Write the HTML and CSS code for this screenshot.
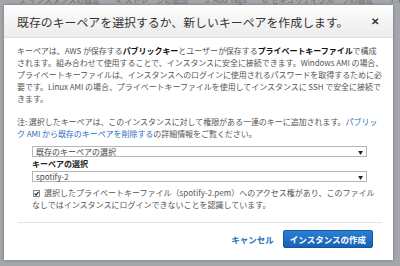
FILE: index.html
```html
<!DOCTYPE html>
<html lang="ja">
<head>
    <meta charset="UTF-8">
    <meta name="viewport" content="width=device-width, initial-scale=1.0">
    <title>キーペアの選択</title>
    <link rel="stylesheet" href="styles.css">
</head>
<body>
    <div class="page">
        <div class="steps">
            <span>3. インスタンスの設定</span>
            <span>4. ストレージの追加</span>
            <span>5. Add Tags</span>
            <span>6. セキュリティグループの設定</span>
            <span>7. 確認</span>
        </div>
    </div>

    <div class="modal">
        <div class="modal-header">
            <h2 class="modal-title">既存のキーペアを選択するか、新しいキーペアを作成します。</h2>
            <span class="modal-close">✕</span>
        </div>
        <div class="modal-body">
            <p class="text">
                キーペアは、AWS が保存する<b>パブリックキー</b>とユーザーが保存する<b>プライベートキーファイル</b>で構成<br>
                されます。組み合わせて使用することで、インスタンスに安全に接続できます。Windows AMI の場合、<br>
                プライベートキーファイルは、インスタンスへのログインに使用されるパスワードを取得するために必<br>
                要です。Linux AMI の場合、プライベートキーファイルを使用してインスタンスに SSH で安全に接続で<br>
                きます。
            </p>
            <p class="text note">
                注: 選択したキーペアは、このインスタンスに対して権限がある一連のキーに追加されます。<a href="#">パブリッ<br>
                ク AMI から既存のキーペアを削除する</a>の詳細情報をご覧ください。
            </p>
            <div class="form">
                <div class="select">
                    <span>既存のキーペアの選択</span>
                    <span class="arrow">▼</span>
                </div>
                <div class="label">キーペアの選択</div>
                <div class="select">
                    <span>spotify-2</span>
                    <span class="arrow">▼</span>
                </div>
                <p class="ack">
                    <span class="checkbox">
                        <svg width="7" height="7" viewBox="0 0 7 7"><rect x="0.5" y="0.5" width="6" height="6" fill="#fff" stroke="#888"/><path d="M1.6 3.6 L3 5 L5.5 1.8" fill="none" stroke="#222" stroke-width="1.2"/></svg>
                    </span>選択したプライベートキーファイル（spotify-2.pem）へのアクセス権があり、このファイル<br>
                    なしではインスタンスにログインできないことを認識しています。
                </p>
            </div>
            <hr class="divider">
            <div class="modal-footer">
                <a href="#" class="btn-link">キャンセル</a>
                <button class="btn-primary">インスタンスの作成</button>
            </div>
        </div>
    </div>
</body>
</html>
```

FILE: styles.css
```css
* {
    margin: 0;
    padding: 0;
    box-sizing: border-box;
}

body {
    font-family: "Noto Sans CJK JP", "Noto Sans", sans-serif;
    background: #a2a5a9;
    width: 400px;
    height: 266px;
    overflow: hidden;
    position: relative;
}

.page {
    height: 266px;
    background: #a2a5a9;
}

.steps {
    display: flex;
    gap: 16px;
    padding-left: 20px;
    margin-top: -5px;
    font-size: 8px;
    line-height: 10px;
    color: #6d7075;
    white-space: nowrap;
}

.modal {
    position: absolute;
    left: 4px;
    top: 5px;
    width: 389px;
    height: 255px;
    background: #fff;
    box-shadow: 0 0 3px rgba(0, 0, 0, 0.3);
    display: flex;
    flex-direction: column;
}

.modal-header {
    height: 33px;
    display: flex;
    align-items: center;
    justify-content: space-between;
    padding: 0 14px 0 13px;
    background: linear-gradient(#fdfdfd, #ececec);
    border-bottom: 1px solid #dcdcdc;
}

.modal-title {
    font-size: 11.9px;
    font-weight: normal;
    color: #333;
    white-space: nowrap;
}

.modal-close {
    font-size: 10px;
    font-weight: bold;
    color: #333;
    line-height: 1;
}

.modal-body {
    flex: 1;
    padding: 7px 11px 0 13px;
    display: flex;
    flex-direction: column;
}

.text {
    font-size: 8px;
    line-height: 12px;
    color: #555;
    white-space: nowrap;
    letter-spacing: -0.05px;
}

.text b {
    color: #111;
}

.note {
    margin-top: 11px;
}

a {
    color: #2a6ebb;
    text-decoration: none;
}

.form {
    margin: 6px 0 0 15px;
    width: 335px;
}

.select {
    height: 11px;
    border: 1px solid #b5b5b5;
    display: flex;
    justify-content: space-between;
    align-items: center;
    padding: 0 3px;
    font-size: 8px;
    color: #444;
}

.arrow {
    font-size: 5px;
    color: #222;
}

.label {
    font-size: 8px;
    font-weight: bold;
    line-height: 14px;
    color: #222;
}

.ack {
    margin-top: 5px;
    font-size: 8px;
    line-height: 12px;
    color: #555;
    white-space: nowrap;
}

.checkbox {
    display: inline-block;
    margin: 0 4px 0 1px;
    vertical-align: -1px;
}

.checkbox svg {
    display: block;
}

.divider {
    border: none;
    border-top: 1px solid #e3e3e3;
    margin: 11px 0 0 1px;
}

.modal-footer {
    display: flex;
    justify-content: flex-end;
    align-items: center;
    gap: 9px;
    padding: 7px 9px 0 0;
}

.btn-link {
    font-size: 8.5px;
    font-weight: bold;
    color: #2a6ebb;
}

.btn-primary {
    height: 18px;
    padding: 0 6px;
    font-family: inherit;
    font-size: 8.5px;
    font-weight: bold;
    color: #fff;
    background: linear-gradient(#2a7fd4, #1862b3);
    border: 1px solid #15579e;
    border-radius: 2px;
}
```
